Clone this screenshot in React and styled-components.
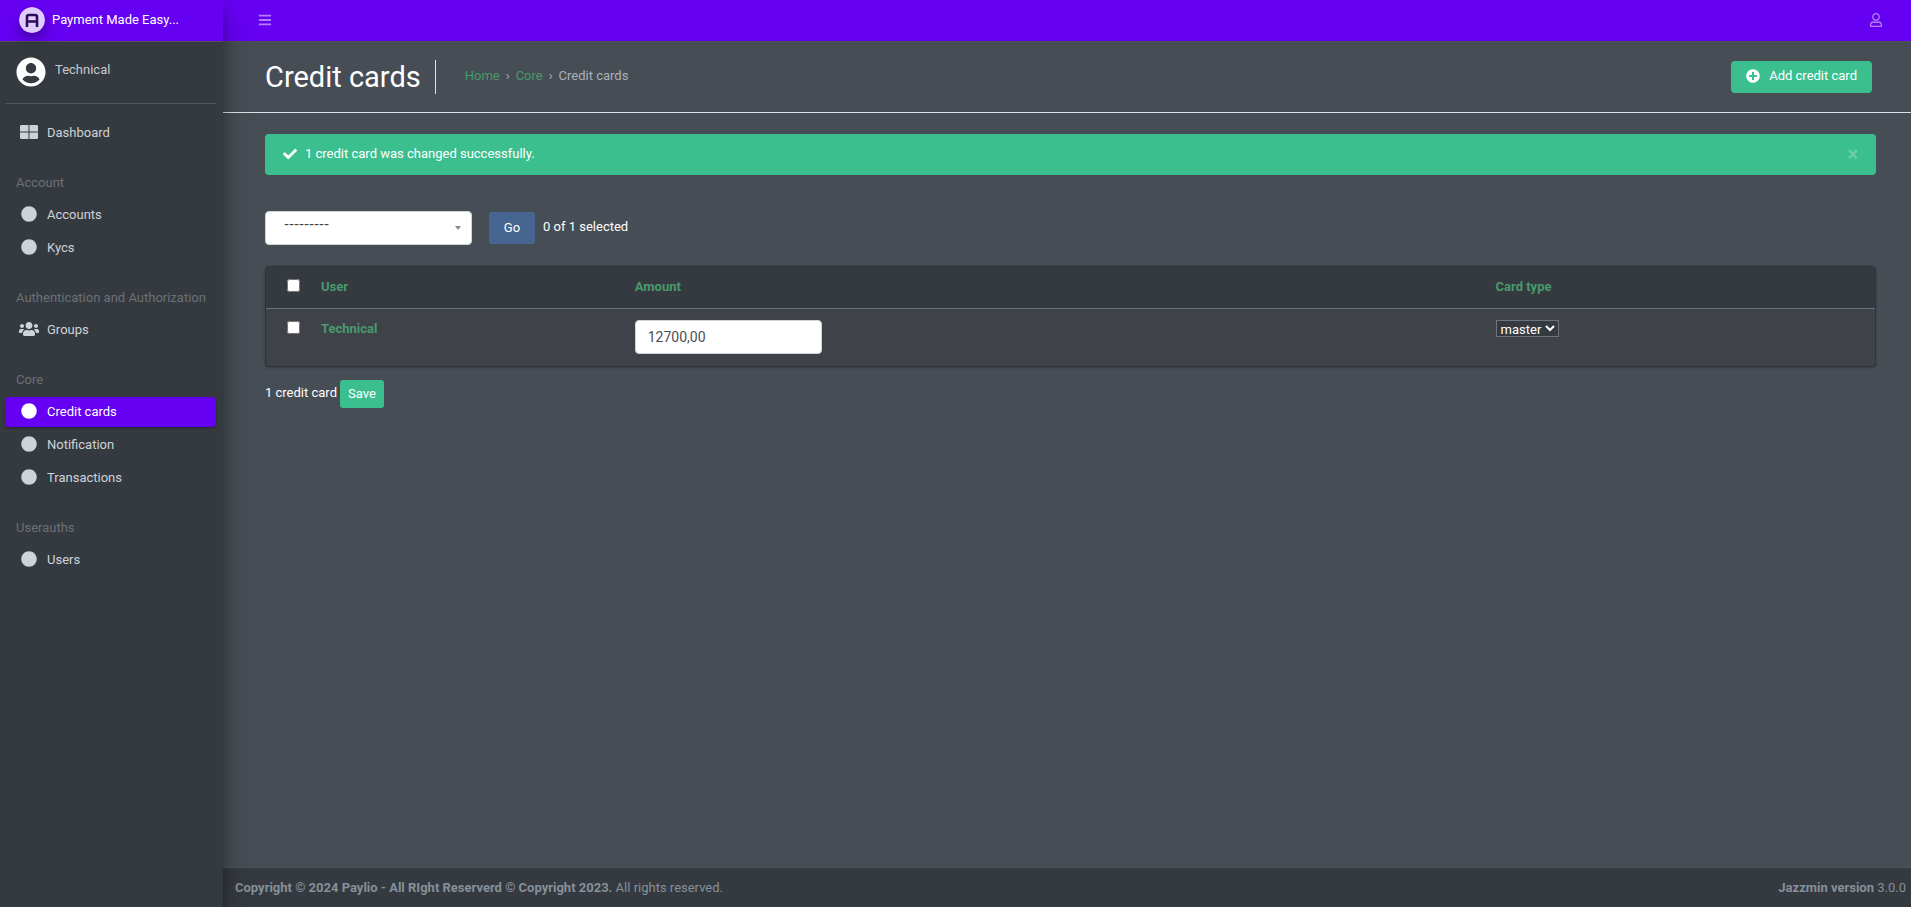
import styled, { createGlobalStyle } from 'styled-components';
import {
  FaBars,
  FaCheck,
  FaCircle,
  FaPlusCircle,
  FaRegUser,
  FaThLarge,
  FaUsers,
  FaUserCircle,
} from 'react-icons/fa';

const menu = [
  { items: [{ name: 'Dashboard', icon: FaThLarge }] },
  { title: 'Account', items: [{ name: 'Accounts' }, { name: 'Kycs' }] },
  { title: 'Authentication and Authorization', items: [{ name: 'Groups', icon: FaUsers }] },
  {
    title: 'Core',
    items: [{ name: 'Credit cards', active: true }, { name: 'Notification' }, { name: 'Transactions' }],
  },
  { title: 'Userauths', items: [{ name: 'Users' }] },
];

function Logo() {
  return (
    <LogoSvg viewBox="0 0 26 26" aria-hidden="true">
      <circle cx="13" cy="13" r="13" fill="#fff" />
      <path d="M8 20V10Q8 8 10 8H16Q18 8 18 10V20M8 14.500H18" fill="none" stroke="#1d1233" strokeWidth="2.600" />
    </LogoSvg>
  );
}

function ThLargeIcon() {
  return (
    <svg width="18" height="14" viewBox="0 0 18 14" fill="currentColor" aria-hidden="true">
      <path d="M1 0H8.500V6.500H0V1ZM9.500 0H17L18 1V6.500H9.500ZM0 7.500H8.500V14H1L0 13ZM9.500 7.500H18V13L17 14H9.500Z" />
    </svg>
  );
}

function MenuIcon({ icon: Icon }) {
  if (Icon === FaThLarge) return <ThLargeIcon />;
  return <Icon size={Icon === FaUsers ? 20 : 16} />;
}

function Sidebar() {
  return (
    <Aside>
      <Brand href="#">
        <Logo />
        Payment Made Easy...
      </Brand>
      <SideBody>
        <UserPanel>
          <FaUserCircle size={30} color="#fff" />
          <a href="#">Technical</a>
        </UserPanel>
        <nav>
          {menu.map((group) => (
            <div key={group.items[0].name}>
              {group.title && <GroupTitle>{group.title}</GroupTitle>}
              {group.items.map(({ name, icon = FaCircle, active }) => (
                <NavLink href="#" key={name} $active={active}>
                  <NavIcon>
                    <MenuIcon icon={icon} />
                  </NavIcon>
                  {name}
                </NavLink>
              ))}
            </div>
          ))}
        </nav>
      </SideBody>
    </Aside>
  );
}

function CardTable() {
  return (
    <TableCard>
      <Table>
        <colgroup>
          <col style={{ width: '43px' }} />
          <col style={{ width: '19.5%' }} />
          <col style={{ width: '53.5%' }} />
          <col />
        </colgroup>
        <thead>
          <tr>
            <th><Checkbox type="checkbox" aria-label="Select all" /></th>
            <th><a href="#">User</a></th>
            <th><a href="#">Amount</a></th>
            <th><a href="#">Card type</a></th>
          </tr>
        </thead>
        <tbody>
          <tr>
            <td><Checkbox type="checkbox" aria-label="Select Technical" /></td>
            <th scope="row"><a href="#">Technical</a></th>
            <td><AmountInput type="text" aria-label="Amount" defaultValue="12700,00" /></td>
            <td>
              <TypeSelect aria-label="Card type" defaultValue="master">
                <option>master</option>
              </TypeSelect>
            </td>
          </tr>
        </tbody>
      </Table>
    </TableCard>
  );
}

export default function App() {
  return (
    <>
      <GlobalStyle />
      <Page>
        <Sidebar />
        <Main>
          <Navbar>
            <IconButton type="button" aria-label="Toggle menu"><FaBars size={14} /></IconButton>
            <IconButton type="button" aria-label="Account"><FaRegUser size={14} /></IconButton>
          </Navbar>
          <PageHeader>
            <Title>Credit cards</Title>
            <Breadcrumb aria-label="Breadcrumb">
              <a href="#">Home</a>
              <span>›</span>
              <a href="#">Core</a>
              <span>›</span>
              <span>Credit cards</span>
            </Breadcrumb>
            <AddButton href="#">
              <FaPlusCircle size={14} />
              Add credit card
            </AddButton>
          </PageHeader>
          <Content>
            <Alert role="alert">
              <FaCheck size={14} />
              <span>1 credit card was changed successfully.</span>
              <CloseButton type="button" aria-label="Close">×</CloseButton>
            </Alert>
            <Actions>
              <SelectWrap>
                <ActionSelect aria-label="Action">
                  <option>---------</option>
                </ActionSelect>
              </SelectWrap>
              <GoButton type="button">Go</GoButton>
              <Counter>0 of 1 selected</Counter>
            </Actions>
            <CardTable />
            <Paginator>
              <Counter>1 credit card</Counter>
              <SaveButton type="submit">Save</SaveButton>
            </Paginator>
          </Content>
          <Footer>
            <span>
              <strong>Copyright © 2024 Paylio - All RIght Reserverd © Copyright 2023.</strong> All rights reserved.
            </span>
            <span>
              <strong>Jazzmin version</strong> 3.0.0
            </span>
          </Footer>
        </Main>
      </Page>
    </>
  );
}

const GlobalStyle = createGlobalStyle`
  * {
    box-sizing: border-box;
  }

  body {
    margin: 0;
    background: #474d54;
    color: #fff;
    font-family: Roboto, sans-serif;
    font-size: 13px;
    line-height: 18px;
  }

  a {
    color: inherit;
    text-decoration: none;
  }

  button, input, select {
    font-family: inherit;
    font-size: inherit;
  }
`;

const Page = styled.div`
  display: grid;
  grid-template-columns: 223px 1fr;
  min-height: 100vh;
`;

const Aside = styled.aside`
  z-index: 1;
  background: #353a40;
  color: #c5cad1;
  box-shadow: 0 14px 28px rgba(0, 0, 0, 0.25), 0 10px 10px rgba(0, 0, 0, 0.22);
`;

const Brand = styled.a`
  display: flex;
  align-items: center;
  gap: 7px;
  height: 42px;
  padding: 0 19px 1px;
  background: #6600f2;
  border-bottom: 1px solid #4b545c;
  color: #fff;
`;

const LogoSvg = styled.svg`
  width: 26px;
  height: 26px;
  border-radius: 50%;
  opacity: 0.8;
  box-shadow: 0 10px 20px rgba(0, 0, 0, 0.19), 0 6px 6px rgba(0, 0, 0, 0.23);
`;

const SideBody = styled.div`
  padding: 0 7px 0 5px;
`;

const UserPanel = styled.div`
  display: flex;
  gap: 9px;
  height: 62px;
  padding: 15px 11px 0;
  margin-bottom: 14px;
  border-bottom: 1px solid #50565d;

  a {
    padding-top: 4px;
  }
`;

const GroupTitle = styled.div`
  padding: 23px 11px 8px;
  color: #6c7075;
  white-space: nowrap;
`;

const NavLink = styled.a`
  display: flex;
  align-items: center;
  gap: 5px;
  height: 30px;
  padding: 0 11px;
  margin-bottom: 3px;
  border-radius: 4px;
  color: ${(p) => (p.$active ? '#fff' : '#ced3d9')};
  background: ${(p) => (p.$active ? '#6600f2' : 'transparent')};
  box-shadow: ${(p) => (p.$active ? '0 1px 3px rgba(0, 0, 0, 0.12), 0 1px 2px rgba(0, 0, 0, 0.24)' : 'none')};
`;

const NavIcon = styled.span`
  display: flex;
  justify-content: center;
  width: 26px;
  padding-bottom: 3px;
`;

const Main = styled.div`
  display: flex;
  flex-direction: column;
  min-width: 0;
`;

const Navbar = styled.header`
  display: flex;
  align-items: center;
  justify-content: space-between;
  height: 42px;
  padding: 0 28px 2px 35px;
  background: #6600f2;
  border-bottom: 1px solid #4b545c;
`;

const IconButton = styled.button`
  display: flex;
  padding: 0;
  border: 0;
  background: none;
  color: #b27ff8;
`;

const PageHeader = styled.div`
  display: flex;
  align-items: center;
  height: 71px;
  padding: 0 39px 0 42px;
  border-bottom: 1px solid #dee2e6;
`;

const Title = styled.h1`
  margin: 0;
  padding-right: 14px;
  border-right: 1px solid #dee2e6;
  font-size: 29px;
  font-weight: 400;
  line-height: 34px;
`;

const Breadcrumb = styled.nav`
  display: flex;
  gap: 6px;
  padding: 0 0 2px 29px;
  color: #acb1b7;

  a {
    color: #489a6c;
  }
`;

const AddButton = styled.a`
  display: flex;
  align-items: center;
  gap: 9px;
  height: 32px;
  margin-left: auto;
  padding: 0 15px 2px;
  border-radius: 4px;
  background: #3bbf8f;
`;

const Content = styled.main`
  flex: 1;
  padding: 21px 35px 0 42px;
`;

const Alert = styled.div`
  display: flex;
  align-items: center;
  gap: 8px;
  height: 41px;
  padding: 0 18px 2px;
  border-radius: 4px;
  background: #3bbf8f;
`;

const CloseButton = styled.button`
  margin-left: auto;
  padding: 0;
  border: 0;
  background: none;
  color: #fff;
  opacity: 0.25;
  font-size: 20px;
  font-weight: 700;
  line-height: 20px;
`;

const Actions = styled.div`
  display: flex;
  align-items: center;
  height: 34px;
  margin: 36px 0 21px;
`;

const SelectWrap = styled.div`
  position: relative;
  width: 207px;
  margin-right: 17px;

  &::after {
    content: '';
    position: absolute;
    top: 15px;
    right: 11px;
    border: 3px solid transparent;
    border-top: 4px solid #888;
    border-bottom: 0;
    pointer-events: none;
  }
`;

const ActionSelect = styled.select`
  display: block;
  width: 100%;
  height: 34px;
  padding: 0 18px 9px;
  appearance: none;
  border: 1px solid #ced4da;
  border-radius: 4px;
  background: #fff;
  color: #444;
  font-family: 'Liberation Sans', sans-serif;
  font-size: 15px;
`;

const GoButton = styled.button`
  width: 46px;
  height: 32px;
  margin-right: 8px;
  padding: 0 0 2px;
  border: 0;
  border-radius: 3px;
  background: #466590;
  color: #fff;
`;

const Counter = styled.span`
  padding-bottom: 2px;
`;

const TableCard = styled.div`
  border: 1px solid #2f3439;
  border-radius: 4px;
  background: #3f4349;
  overflow: hidden;
  box-shadow: 0 0 1px rgba(0, 0, 0, 0.13), 0 1px 3px rgba(0, 0, 0, 0.2);
`;

const Table = styled.table`
  width: 100%;
  table-layout: fixed;
  border-collapse: collapse;

  th, td {
    padding: 11px 12px;
    text-align: left;
    vertical-align: top;
  }

  th a {
    color: #489a6c;
    font-weight: 700;
  }

  td:first-child, th:first-child {
    padding-right: 0;
    padding-left: 21px;
  }

  thead th {
    height: 41px;
    background: #353a40;
    border-bottom: 1px solid #6c757d;
  }

  tbody td {
    padding-bottom: 12px;
  }
`;

const Checkbox = styled.input`
  display: block;
  width: 13px;
  height: 13px;
  margin: 1px 0 0;
`;

const AmountInput = styled.input`
  display: block;
  width: 187px;
  height: 34px;
  padding: 0 12px;
  border: 1px solid #ced4da;
  border-radius: 4px;
  background: #fff;
  color: #495057;
  font-size: 14px;
`;

const TypeSelect = styled.select`
  display: block;
  height: 17px;
  padding: 0;
  border: 1px solid #6c757d;
  background: #353a40;
  color: #fff;
`;

const Paginator = styled.div`
  display: flex;
  align-items: center;
  gap: 3px;
  padding: 13px 0;
`;

const SaveButton = styled.button`
  height: 28px;
  padding: 0 8px;
  border: 0;
  border-radius: 3px;
  background: #3bbf8f;
  color: #fff;
`;

const Footer = styled.footer`
  display: flex;
  align-items: center;
  justify-content: space-between;
  height: 40px;
  padding: 0 5px 0 12px;
  background: #353a40;
  border-top: 1px solid #4b545c;
  color: #869099;
`;
